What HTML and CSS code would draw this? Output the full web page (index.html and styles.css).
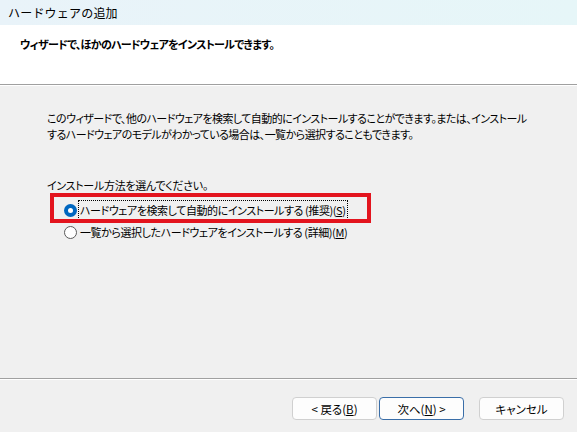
FILE: index.html
```html
<!DOCTYPE html>
<html lang="ja">
<head>
<meta charset="utf-8">
<title>ハードウェアの追加</title>
<link rel="stylesheet" href="styles.css">
</head>
<body>
<div class="window">
  <div class="titlebar">ハードウェアの追加</div>
  <div class="header">
    <div class="header-text">ウィザードで、ほかのハードウェアをインストールできます。</div>
  </div>
  <div class="sep"></div>
  <div class="main">
    <p class="desc">このウィザードで、他のハードウェアを検索して自動的にインストールすることができます。または、インストール<br>するハードウェアのモデルがわかっている場合は、一覧から選択することもできます。</p>
    <p class="prompt">インストール方法を選んでください。</p>
    <div class="options">
      <div class="highlight"></div>
      <div class="option">
        <span class="radio checked"></span>
        <span class="label focused">ハードウェアを検索して自動的にインストールする (推奨)(<u>S</u>)</span>
      </div>
      <div class="option">
        <span class="radio"></span>
        <span class="label">一覧から選択したハードウェアをインストールする (詳細)(<u>M</u>)</span>
      </div>
    </div>
  </div>
  <div class="sep"></div>
  <div class="footer">
    <button class="btn">&lt; 戻る(<u>B</u>)</button>
    <button class="btn default">次へ(<u>N</u>) &gt;</button>
    <button class="btn cancel">キャンセル</button>
  </div>
</div>
</body>
</html>
```

FILE: styles.css
```css
* { box-sizing: border-box; }
html, body { margin: 0; padding: 0; }
body {
  width: 577px;
  height: 432px;
  overflow: hidden;
  font-family: "Noto Sans CJK JP", "Noto Sans", sans-serif;
  font-size: 12px;
  color: #000;
  background: #f0f0f0;
}
.window {
  width: 577px;
  height: 432px;
  display: flex;
  flex-direction: column;
}
.titlebar {
  height: 25px;
  flex: none;
  padding-left: 8px;
  line-height: 25px;
  font-size: 12px;
  letter-spacing: 0.2px;
  background: linear-gradient(to right, #e9f3f9, #e6f6f8);
}
.header {
  height: 59px;
  flex: none;
  background: #fff;
  padding: 11px 0 0 20px;
}
.header-text {
  font-size: 11px;
  font-weight: bold;
  line-height: 16px;
  font-feature-settings: "palt";
  letter-spacing: -0.72px;
}
.sep {
  height: 2px;
  flex: none;
  border-top: 1px solid #a0a0a0;
  background: #fff;
}
.main {
  flex: 1;
  padding: 24px 0 0 47px;
  font-size: 11px;
  font-feature-settings: "palt";
}
.desc {
  margin: 0;
  line-height: 16px;
  letter-spacing: -0.55px;
  white-space: nowrap;
}
.prompt {
  margin: 35px 0 0 0;
  line-height: 16px;
  letter-spacing: -0.3px;
}
.options {
  position: relative;
  margin-top: 6px;
  padding-left: 16px;
}
.highlight {
  position: absolute;
  left: 3px;
  top: -6px;
  width: 321px;
  height: 30px;
  border: 4px solid #e3141e;
}
.option {
  height: 22px;
  display: flex;
  align-items: center;
  gap: 1px;
}
.radio {
  width: 13px;
  height: 13px;
  margin-left: 1px;
  border-radius: 50%;
  border: 1px solid #5a5a5a;
  background: #fff;
  flex: none;
  position: relative;
}
.radio.checked {
  border: none;
  background: #0067c0;
}
.radio.checked::after {
  content: "";
  position: absolute;
  left: 4px;
  top: 4px;
  width: 5px;
  height: 5px;
  border-radius: 50%;
  background: #fff;
}
.label {
  padding: 1px 1px;
  line-height: 16px;
  border: 1px solid transparent;
  letter-spacing: -0.42px;
}
.label.focused {
  border: 1px dotted #000;
}
.footer {
  height: 52px;
  flex: none;
  display: flex;
  align-items: flex-start;
  padding: 17px 0 0 292px;
}
.btn {
  width: 85px;
  height: 23px;
  font-family: inherit;
  font-size: 11.5px;
  color: #000;
  background: #fdfdfd;
  border: 1px solid #d0d0d0;
  border-radius: 4px;
  padding: 0;
  margin-right: 2px;
  font-feature-settings: "palt";
}
.btn.default {
  border-color: #3a6ea8;
}
.btn.cancel {
  margin-left: 13px;
  margin-right: 0;
}
```
